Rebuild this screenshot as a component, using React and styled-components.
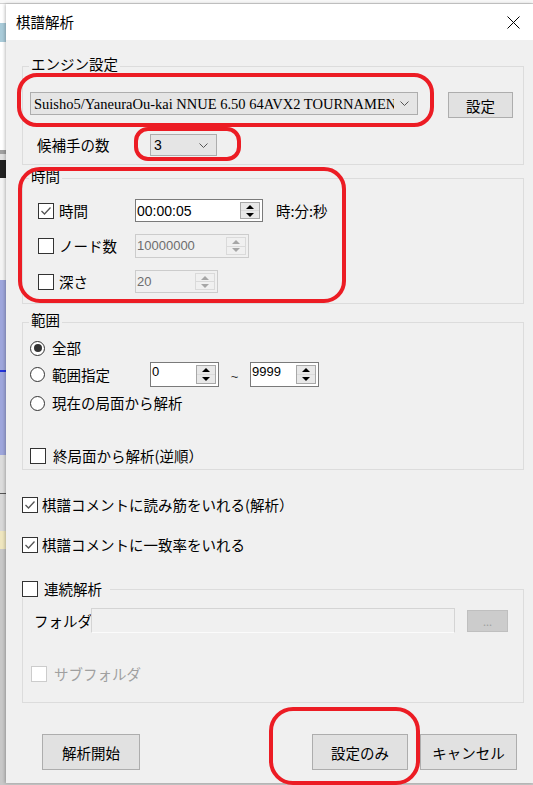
import React from 'react';
import styled, { createGlobalStyle } from 'styled-components';

const GlobalStyle = createGlobalStyle`
  html, body {
    margin: 0;
    padding: 0;
    background: #fff;
  }
  body {
    font-family: "Noto Sans CJK JP", "Noto Sans", sans-serif;
    font-size: 14.5px;
    color: #000;
    overflow: hidden;
  }
`;

const Screen = styled.div`
  position: relative;
  width: 533px;
  height: 785px;
  overflow: hidden;
  display: flex;
  flex-direction: column;
  background: #c8c8c8;
`;

const TopEdge = styled.div`
  height: 3px;
  flex: none;
  background: #f7f7f7;
  border-bottom: 1px solid #d2d2d2;
`;

const Desk = styled.div`
  flex: 1;
  display: flex;
  min-height: 0;
`;

const BackStrip = styled.div`
  width: 6px;
  flex: none;
  display: flex;
  flex-direction: column;
`;

const BackSeg = styled.div`
  flex: none;
  height: ${p => p.$h}px;
  background: ${p => p.$bg};
`;

const Dialog = styled.div`
  flex: 1;
  height: 779px;
  display: flex;
  flex-direction: column;
  box-shadow: -1px 0 3px rgba(0, 0, 0, 0.25);
`;

const TitleBar = styled.div`
  height: 36px;
  flex: none;
  background: #fff;
  display: flex;
  align-items: center;
  justify-content: space-between;
  padding: 0 13px 0 10px;
`;

const Title = styled.span`
  font-size: 14.5px;
  line-height: 18px;
`;

const Body = styled.div`
  flex: 1;
  background: #f0f0f0;
  display: flex;
  flex-direction: column;
  padding: 0 9px 0 16px;
`;

const Group = styled.fieldset`
  margin: ${p => p.$mt}px 0 0;
  padding: 0;
  border: 1px solid #dcdcdc;
  min-width: 0;
`;

const Legend = styled.legend`
  padding: ${p => (p.$check ? '0 8px 0 0' : '0 2px')};
  margin-left: ${p => (p.$check ? '-1px' : '6px')};
  line-height: 18px;
  display: flex;
  align-items: center;
  gap: 6px;
`;

const LegendText = styled.span`
  position: relative;
  top: -2px;
`;

const GroupContent = styled.div`
  padding: ${p => p.$pad};
  display: flex;
  flex-direction: column;
`;

const Row = styled.div`
  display: flex;
  align-items: ${p => p.$align || 'center'};
  gap: ${p => p.$gap || 0}px;
  margin-top: ${p => p.$mt || 0}px;
  margin-left: ${p => p.$ml || 0}px;
  height: ${p => (p.$h ? `${p.$h}px` : 'auto')};
`;

const Combo = styled.div`
  width: ${p => p.$w}px;
  height: ${p => p.$h}px;
  box-sizing: border-box;
  flex: none;
  background: #e5e5e5;
  border: 1px solid #adadad;
  display: flex;
  align-items: center;
  padding: 0 8px 0 3px;
  gap: 6px;
`;

const ComboText = styled.span`
  flex: 1;
  min-width: 0;
  overflow: hidden;
  white-space: nowrap;
  font-family: ${p => (p.$serif ? '"Liberation Serif", serif' : '"Liberation Sans", sans-serif')};
  font-size: ${p => (p.$serif ? 14.5 : 14)}px;
  line-height: 18px;
`;

const Button = styled.div`
  width: ${p => p.$w}px;
  height: ${p => p.$h}px;
  box-sizing: border-box;
  flex: none;
  background: ${p => (p.$disabled ? '#cccccc' : '#e1e1e1')};
  border: 1px solid ${p => (p.$disabled ? '#bfbfbf' : '#adadad')};
  color: ${p => (p.$disabled ? '#a0a0a0' : '#000')};
  font-size: ${p => (p.$small ? 11 : 14.5)}px;
  display: flex;
  align-items: center;
  justify-content: center;
  margin-left: ${p => p.$ml || 0}px;
`;

const Label = styled.span`
  width: ${p => (p.$w ? `${p.$w}px` : 'auto')};
  flex: none;
  line-height: 18px;
  white-space: nowrap;
  color: ${p => (p.$disabled ? '#a0a0a0' : '#000')};
  margin-left: ${p => p.$ml || 0}px;
`;

const CheckLabel = styled.label`
  display: flex;
  align-items: center;
  gap: ${p => p.$gap || 5}px;
  width: ${p => (p.$w ? `${p.$w}px` : 'auto')};
  flex: none;
  white-space: nowrap;
  line-height: 18px;
  color: ${p => (p.$disabled ? '#a0a0a0' : '#000')};
`;

const Box = styled.span`
  width: 16px;
  height: 16px;
  box-sizing: border-box;
  flex: none;
  border: 1px solid ${p => (p.$disabled ? '#cccccc' : '#333')};
  background: #fff;
  display: flex;
  align-items: center;
  justify-content: center;
`;

const Radio = styled.span`
  width: 15px;
  height: 15px;
  box-sizing: border-box;
  flex: none;
  border: 1px solid #333;
  border-radius: 50%;
  background: #fff;
  display: flex;
  align-items: center;
  justify-content: center;
  &::after {
    content: "";
    width: 8px;
    height: 8px;
    border-radius: 50%;
    background: ${p => (p.$on ? '#333' : 'transparent')};
  }
`;

const SpinBox = styled.div`
  width: ${p => p.$w}px;
  height: ${p => p.$h}px;
  box-sizing: border-box;
  flex: none;
  display: flex;
  align-items: stretch;
  border: 1px solid ${p => (p.$disabled ? '#cccccc' : '#7a7a7a')};
  background: ${p => (p.$disabled ? '#f0f0f0' : '#fff')};
`;

const SpinValue = styled.span`
  flex: 1;
  padding-left: 1px;
  font-family: "Liberation Sans", Arial, sans-serif;
  font-size: ${p => (p.$big ? 14 : 13)}px;
  color: ${p => (p.$disabled ? '#6d6d6d' : '#000')};
  display: flex;
  align-items: ${p => (p.$top ? 'flex-start' : 'center')};
  line-height: 18px;
`;

const Spinner = styled.div`
  width: 18px;
  margin: 2px 2px 2px 0;
  display: flex;
  flex-direction: column;
  border: 1px solid ${p => (p.$disabled ? '#dadada' : '#a8a8a8')};
`;

const SpinHalf = styled.div`
  flex: 1;
  display: flex;
  align-items: center;
  justify-content: center;
  background: ${p => (p.$disabled ? '#f0f0f0' : '#e8e8e8')};
  & + & {
    border-top: 1px solid ${p => (p.$disabled ? '#dadada' : '#a8a8a8')};
  }
`;

const Tilde = styled.span`
  width: 31px;
  flex: none;
  text-align: center;
  font-family: "Liberation Sans", sans-serif;
  font-size: 13px;
  color: #333;
  padding-top: 4px;
`;

const FolderField = styled.div`
  width: 364px;
  height: 25px;
  box-sizing: border-box;
  flex: none;
  background: #f0f0f0;
  border: 1px solid #d4d4d4;
  border-bottom-color: #fbfbfb;
`;

const ButtonRow = styled.div`
  display: flex;
  align-items: center;
  margin-top: 31px;
  padding: 0 7px 0 20px;
`;

const Spacer = styled.div`
  flex: 1;
`;

const Mark = styled.div`
  position: absolute;
  left: ${p => p.$x}px;
  top: ${p => p.$y}px;
  width: ${p => p.$w}px;
  height: ${p => p.$h}px;
  box-sizing: border-box;
  border: 4px solid #ec1c24;
  border-radius: ${p => p.$r}px;
  pointer-events: none;
`;

const Chevron = () => (
  <svg width="9" height="5" viewBox="0 0 9 5">
    <polyline points="0.5,0.5 4.5,4.5 8.5,0.5" fill="none" stroke="#555" strokeWidth="1" />
  </svg>
);

const Tick = () => (
  <svg width="12" height="12" viewBox="0 0 12 12">
    <polyline points="1.5,6 4.5,9 10.5,2.5" fill="none" stroke="#555" strokeWidth="1.3" />
  </svg>
);

const Tri = ({ up, color }) => (
  <svg width="8" height="4" viewBox="0 0 8 4">
    <polygon points={up ? '0,4 4,0 8,4' : '0,0 8,0 4,4'} fill={color} />
  </svg>
);

const Check = ({ checked, disabled, children, w, gap }) => (
  <CheckLabel $w={w} $gap={gap} $disabled={disabled}>
    <Box $disabled={disabled}>{checked && <Tick />}</Box>
    {children}
  </CheckLabel>
);

const Spin = ({ value, w, h, disabled, big, top }) => {
  const c = disabled ? '#a6a6a6' : '#000';
  return (
    <SpinBox $w={w} $h={h} $disabled={disabled}>
      <SpinValue $disabled={disabled} $big={big} $top={top}>{value}</SpinValue>
      <Spinner $disabled={disabled}>
        <SpinHalf $disabled={disabled}><Tri up color={c} /></SpinHalf>
        <SpinHalf $disabled={disabled}><Tri color={c} /></SpinHalf>
      </Spinner>
    </SpinBox>
  );
};

const backSegs = [
  [19, '#ffffff'], [19, '#a9cbd9'], [108, '#ffffff'], [4, '#a0a0a0'], [6, '#e0e0e0'],
  [18, '#222222'], [102, '#f4f4f4'], [90, '#9ea6dc'], [2, '#2233dd'], [83, '#9ea6dc'],
  [38, '#dcdcdc'], [1, '#555555'], [37, '#d8d8d8'], [18, '#efe6bf'], [236, '#c8c8c8'],
];

export default function App() {
  return (
    <>
      <GlobalStyle />
      <Screen>
        <TopEdge />
        <Desk>
          <BackStrip>
            {backSegs.map(([h, bg], i) => <BackSeg key={i} $h={h} $bg={bg} />)}
          </BackStrip>
          <Dialog>
            <TitleBar>
              <Title>棋譜解析</Title>
              <svg width="13" height="13" viewBox="0 0 13 13">
                <path d="M0.5 0.5 L12.5 12.5 M12.5 0.5 L0.5 12.5" stroke="#000" strokeWidth="1" />
              </svg>
            </TitleBar>
            <Body>
              <Group $mt={17}>
                <Legend><LegendText>エンジン設定</LegendText></Legend>
                <GroupContent $pad="17px 0 8px 7px">
                  <Row $align="flex-start" $gap={30}>
                    <Combo $w={388} $h={23}>
                      <ComboText $serif>Suisho5/YaneuraOu-kai NNUE 6.50 64AVX2 TOURNAMENT</ComboText>
                      <Chevron />
                    </Combo>
                    <Button $w={65} $h={26}>設定</Button>
                  </Row>
                  <Row $mt={16}>
                    <Label $w={113} $ml={7}>候補手の数</Label>
                    <Combo $w={67} $h={22}>
                      <ComboText>3</ComboText>
                      <Chevron />
                    </Combo>
                  </Row>
                </GroupContent>
              </Group>

              <Group $mt={4}>
                <Legend><LegendText>時間</LegendText></Legend>
                <GroupContent $pad="12px 0 10px 15px">
                  <Row>
                    <Check checked w={97}>時間</Check>
                    <Spin value="00:00:05" w={128} h={23} big />
                    <Label $ml={13}>時:分:秒</Label>
                  </Row>
                  <Row $mt={12}>
                    <Check w={97}>ノード数</Check>
                    <Spin value="10000000" w={114} h={24} disabled />
                  </Row>
                  <Row $mt={12}>
                    <Check w={97}>深さ</Check>
                    <Spin value="20" w={83} h={23} disabled />
                  </Row>
                </GroupContent>
              </Group>

              <Group $mt={9}>
                <Legend><LegendText>範囲</LegendText></Legend>
                <GroupContent $pad="9px 0 5px 7px">
                  <Row $gap={7} $h={16}>
                    <Radio $on />
                    <Label>全部</Label>
                  </Row>
                  <Row $mt={6} $h={25}>
                    <Radio />
                    <Label $w={98} $ml={7}>範囲指定</Label>
                    <Spin value="0" w={69} h={25} top />
                    <Tilde>~</Tilde>
                    <Spin value="9999" w={69} h={25} top />
                  </Row>
                  <Row $mt={8} $gap={7} $h={16}>
                    <Radio />
                    <Label>現在の局面から解析</Label>
                  </Row>
                  <Row $mt={37} $h={16}>
                    <Check gap={7}>終局面から解析(逆順）</Check>
                  </Row>
                </GroupContent>
              </Group>

              <Row $mt={27} $h={16}>
                <Check checked gap={4}>棋譜コメントに読み筋をいれる(解析）</Check>
              </Row>
              <Row $mt={24} $h={16}>
                <Check checked gap={4}>棋譜コメントに一致率をいれる</Check>
              </Row>

              <Group $mt={27}>
                <Legend $check>
                  <Box />
                  <span>連続解析</span>
                </Legend>
                <GroupContent $pad="10px 0 20px 11px">
                  <Row>
                    <Label $w={57}>フォルダ</Label>
                    <FolderField />
                    <Button $w={41} $h={22} $ml={12} $disabled $small>...</Button>
                  </Row>
                  <Row $mt={33} $ml={-3} $h={16}>
                    <Check disabled gap={7}>サブフォルダ</Check>
                  </Row>
                </GroupContent>
              </Group>

              <ButtonRow>
                <Button $w={98} $h={36}>解析開始</Button>
                <Spacer />
                <Button $w={96} $h={36}>設定のみ</Button>
                <Button $w={97} $h={36} $ml={12}>キャンセル</Button>
              </ButtonRow>
            </Body>
          </Dialog>
        </Desk>

        <Mark $x={17} $y={73} $w={417} $h={54} $r={20} />
        <Mark $x={134} $y={127} $w={107} $h={34} $r={14} />
        <Mark $x={18} $y={167} $w={328} $h={136} $r={22} />
        <Mark $x={269} $y={707} $w={151} $h={78} $r={24} />
      </Screen>
    </>
  );
}
